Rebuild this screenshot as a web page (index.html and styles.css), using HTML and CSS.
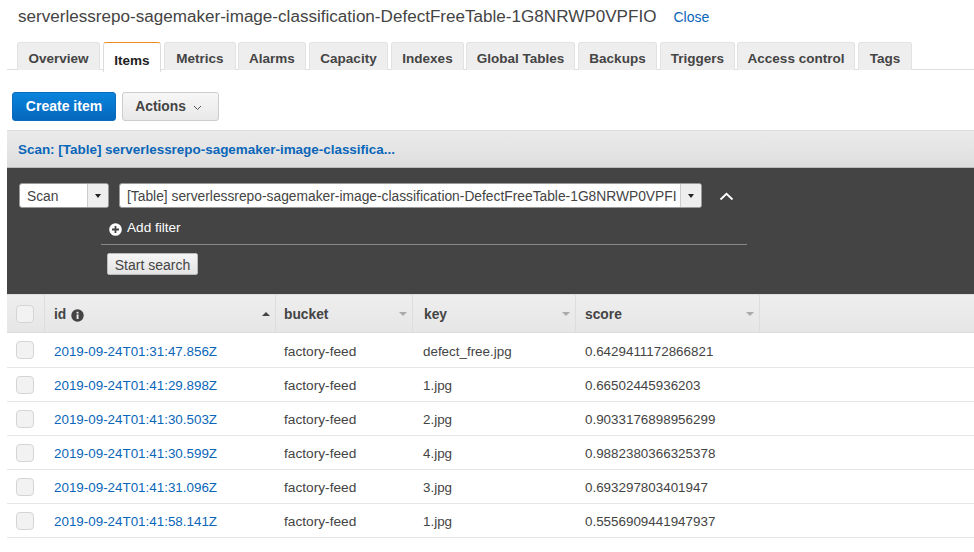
FILE: index.html
```html
<!DOCTYPE html>
<html lang="en">
<head>
<meta charset="utf-8">
<title>DynamoDB items</title>
<link rel="stylesheet" href="styles.css">
</head>
<body>
<header class="title-row">
  <h1 class="title">serverlessrepo-sagemaker-image-classification-DefectFreeTable-1G8NRWP0VPFIO</h1>
  <a class="close">Close</a>
</header>
<nav class="tabs">
  <a class="tab tab-overview">Overview</a>
  <a class="tab tab-active">Items</a>
  <a class="tab tab-metrics">Metrics</a>
  <a class="tab tab-alarms">Alarms</a>
  <a class="tab tab-capacity">Capacity</a>
  <a class="tab tab-indexes">Indexes</a>
  <a class="tab tab-global">Global Tables</a>
  <a class="tab tab-backups">Backups</a>
  <a class="tab tab-triggers">Triggers</a>
  <a class="tab tab-access">Access control</a>
  <a class="tab tab-tags">Tags</a>
</nav>
<div class="toolbar">
  <button class="btn btn-primary">Create item</button>
  <button class="btn btn-default">Actions
    <svg class="chev" width="9" height="6" viewBox="0 0 9 6"><path d="M1 1l3.5 3.5L8 1" fill="none" stroke="#555" stroke-width="1"/></svg>
  </button>
</div>
<main class="panel">
  <div class="scan-bar"><a class="scan-link">Scan: [Table] serverlessrepo-sagemaker-image-classifica...</a></div>
  <section class="query">
    <div class="query-row">
      <div class="select select-scan"><span class="select-text">Scan</span><span class="select-arrow"><i class="caret"></i></span></div>
      <div class="select select-table"><span class="select-text">[Table] serverlessrepo-sagemaker-image-classification-DefectFreeTable-1G8NRWP0VPFIO</span><span class="select-arrow"><i class="caret"></i></span></div>
      <svg class="collapse" width="15" height="9" viewBox="0 0 15 9"><path d="M1.5 7.5L7.5 1.8l6 5.7" fill="none" stroke="#fff" stroke-width="1.8"/></svg>
    </div>
    <div class="filter-block">
      <div class="add-filter">
        <svg class="plus" width="13" height="13" viewBox="0 0 13 13"><circle cx="6.5" cy="6.5" r="6.3" fill="#fff"/><path d="M6.5 3v7M3 6.5h7" stroke="#444" stroke-width="1.8"/></svg>
        <span>Add filter</span>
      </div>
      <button class="btn-search">Start search</button>
    </div>
  </section>
  <section class="grid">
    <div class="row head">
      <div class="cell cell-check"><span class="check"></span></div>
      <div class="cell cell-head cell-id"><span>id</span>
        <svg class="info" width="13" height="13" viewBox="0 0 13 13"><circle cx="6.5" cy="6.5" r="6.2" fill="#444"/><rect x="5.6" y="5.4" width="1.9" height="4.6" fill="#eee"/><rect x="5.6" y="2.8" width="1.9" height="1.7" fill="#eee"/></svg>
        <i class="sort sort-up"></i></div>
      <div class="cell cell-head cell-bucket"><span>bucket</span><i class="sort"></i></div>
      <div class="cell cell-head cell-keyhead"><span>key</span><i class="sort"></i></div>
      <div class="cell cell-head cell-last"><span>score</span><i class="sort"></i></div>
      <div class="cell cell-fill"></div>
    </div>
    <div class="row row-first"><div class="cell cell-check"><span class="check"></span></div><div class="cell"><a class="link">2019-09-24T01:31:47.856Z</a></div><div class="cell cell-feed">factory-feed</div><div class="cell cell-key">defect_free.jpg</div><div class="cell">0.6429411172866821</div></div>
    <div class="row"><div class="cell cell-check"><span class="check"></span></div><div class="cell"><a class="link">2019-09-24T01:41:29.898Z</a></div><div class="cell cell-feed">factory-feed</div><div class="cell cell-key">1.jpg</div><div class="cell">0.66502445936203</div></div>
    <div class="row"><div class="cell cell-check"><span class="check"></span></div><div class="cell"><a class="link">2019-09-24T01:41:30.503Z</a></div><div class="cell cell-feed">factory-feed</div><div class="cell cell-key">2.jpg</div><div class="cell">0.9033176898956299</div></div>
    <div class="row"><div class="cell cell-check"><span class="check"></span></div><div class="cell"><a class="link">2019-09-24T01:41:30.599Z</a></div><div class="cell cell-feed">factory-feed</div><div class="cell cell-key">4.jpg</div><div class="cell">0.9882380366325378</div></div>
    <div class="row"><div class="cell cell-check"><span class="check"></span></div><div class="cell"><a class="link">2019-09-24T01:41:31.096Z</a></div><div class="cell cell-feed">factory-feed</div><div class="cell cell-key">3.jpg</div><div class="cell">0.693297803401947</div></div>
    <div class="row"><div class="cell cell-check"><span class="check"></span></div><div class="cell"><a class="link">2019-09-24T01:41:58.141Z</a></div><div class="cell cell-feed">factory-feed</div><div class="cell cell-key">1.jpg</div><div class="cell">0.5556909441947937</div></div>
  </section>
</main>
</body>
</html>
```
FILE: styles.css
```css
* { box-sizing: border-box; }
html, body { margin: 0; padding: 0; }
body {
  width: 974px;
  height: 552px;
  overflow: hidden;
  background: #fff;
  color: #444;
  font-family: "Liberation Sans", Arial, sans-serif;
  font-size: 13.4px;
}
.title-row {
  display: flex;
  align-items: baseline;
  height: 42px;
  padding: 6px 0 0 18px;
}
.title {
  margin: 0;
  font-size: 17.08px;
  font-weight: 400;
  line-height: 22px;
  color: #444;
}
.close { margin-left: 17px; color: #0a66b8; font-size: 14px; }

.tabs {
  display: flex;
  gap: 3px;
  height: 28px;
  margin-left: 7px;
  padding-left: 10px;
  border-bottom: 1px solid #ddd;
}
.tab {
  display: flex;
  align-items: center;
  justify-content: center;
  height: 28px;
  background: #eee;
  border: 1px solid #e2e2e2;
  border-bottom: 0;
  border-radius: 3px 3px 0 0;
  font-weight: 700;
  font-size: 13.5px;
  color: #444;
  padding-top: 4px;
}
.tab-overview { width: 83px; }
.tab-active {
  width: 58px;
  height: 30px;
  background: #fff;
  border-color: #ddd;
  border-top: 1px solid #f08a1d;
  color: #222;
  padding-top: 6px;
}
.tab-metrics { width: 72px; }
.tab-alarms { width: 68px; margin-left: -1px; }
.tab-capacity { width: 79px; }
.tab-indexes { width: 73px; }
.tab-global { width: 109px; margin-left: -1px; }
.tab-backups { width: 79px; }
.tab-triggers { width: 75px; }
.tab-access { width: 118px; margin-left: -1px; }
.tab-tags { width: 54px; }

.toolbar {
  display: flex;
  gap: 6px;
  height: 60px;
  padding: 22px 0 0 12px;
}
.btn {
  height: 29px;
  border-radius: 3px;
  font-family: inherit;
  font-weight: 700;
  font-size: 14px;
  padding: 0 0 1px;
}
.btn-primary {
  width: 104px;
  color: #fff;
  background: linear-gradient(#0a84dc, #0467bd);
  border: 1px solid #0a6cbf;
}
.btn-default {
  width: 97px;
  padding-right: 4px;
  font-size: 13.8px;
  color: #444;
  background: linear-gradient(#f7f7f7, #e8e8e8);
  border: 1px solid #ccc;
}
.chev { margin-left: 3px; }

.panel { margin-left: 7px; }
.scan-bar {
  display: flex;
  align-items: center;
  height: 38px;
  padding: 1px 0 0 11px;
  background: linear-gradient(#ebebeb, #dedede);
  border-top: 1px solid #ddd;
  border-bottom: 1px solid #bbb;
}
.scan-link { color: #0a66b8; font-weight: 700; font-size: 13.45px; }

.query {
  height: 126px;
  background: #444;
  padding: 15px 0 0 12px;
}
.query-row { display: flex; align-items: center; height: 25px; }
.select {
  display: flex;
  height: 25px;
  background: #fff;
  border-radius: 3px;
  border: 1px solid #999;
  overflow: hidden;
  color: #444;
  font-size: 13.8px;
}
.select-scan { width: 90px; }
.select-table { width: 583px; margin-left: 10px; }
.select-text {
  flex: 1;
  min-width: 0;
  white-space: nowrap;
  overflow: hidden;
  margin-left: 7px;
  line-height: 25px;
}
.select-table .select-text { margin-right: 4px; }
.select-arrow {
  display: flex;
  align-items: center;
  justify-content: center;
  flex: none;
  width: 21px;
  background: #eee;
  border-left: 1px solid #ccc;
}
.caret {
  width: 0;
  height: 0;
  border: 3.5px solid transparent;
  border-top: 4px solid #222;
  border-bottom: 0;
}
.collapse { margin-left: 17px; margin-top: 1px; }

.filter-block { width: 646px; margin: 0 0 0 82px; }
.add-filter {
  display: flex;
  align-items: center;
  gap: 5px;
  height: 37px;
  padding: 3px 0 0 8px;
  border-bottom: 1px solid #888;
  color: #fff;
  font-size: 13.6px;
}
.plus { margin-top: 3px; }
.btn-search {
  display: block;
  width: 91px;
  height: 22px;
  margin: 8px 0 0 6px;
  padding: 1px 0 0;
  border: 1px solid #bbb;
  border-radius: 2px;
  background: linear-gradient(#f5f5f5, #e4e4e4);
  color: #444;
  font-family: inherit;
  font-size: 14px;
}

.grid { display: flex; flex-direction: column; }
.row {
  display: grid;
  grid-template-columns: 37px 231px 137px 163px 185px 1fr;
  align-items: center;
  height: 34px;
  border-bottom: 1px solid #e6e6e6;
}
.head {
  height: 39px;
  background: linear-gradient(#eee, #e6e6e6);
  border-top: 1px solid #ddd;
  border-bottom: 1px solid #ddd;
}
.row-first { height: 35px; }
.cell { display: flex; align-items: center; padding: 1px 0 0 10px; white-space: nowrap; }
.row-first .cell { padding-top: 2px; }
.cell-feed { padding-left: 9px; font-size: 13.7px; }
.cell-key { padding-left: 11px; }
.row .cell-check { padding: 0 0 0 9px; }
.cell-head {
  position: relative;
  height: 100%;
  font-weight: 700;
  font-size: 13.8px;
  border-left: 1px solid #ddd;
  padding: 1px 0 0 9px;
}
.cell-bucket { padding-left: 8px; }
.cell-keyhead { padding-left: 11px; }
.cell-last { border-right: 1px solid #ddd; }
.cell-fill { height: 100%; }
.head .cell-check { height: 100%; }
.info { margin: 3px 0 0 5px; }
.check {
  width: 18px;
  height: 18px;
  border: 1px solid #d5d5d5;
  border-radius: 4px;
  background: #f2f2f2;
}
.link { color: #0a66b8; }
.sort {
  position: absolute;
  right: 5px;
  top: 17px;
  width: 0;
  height: 0;
  border: 4px solid transparent;
  border-top: 4px solid #aaa;
  border-bottom: 0;
}
.sort-up {
  border-top: 0;
  border-bottom: 4px solid #444;
}
```
